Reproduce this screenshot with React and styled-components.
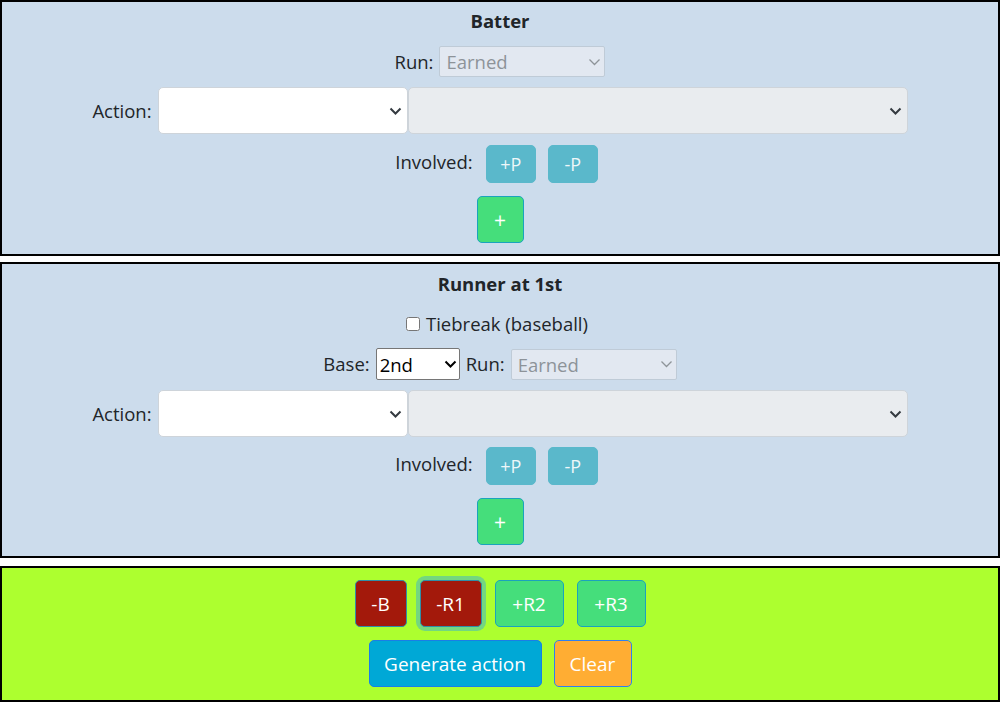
import React from 'react';
import styled, { createGlobalStyle, css } from 'styled-components';

const Global = createGlobalStyle`
  body {
    margin: 0;
    font-family: "Open Sans", "Noto Sans", sans-serif;
    font-size: 18.5px;
    color: #212529;
    background: #fff;
  }
`;

const Panel = styled.section`
  border: 2px solid #000;
  background: ${p => p.$bg};
  display: flex;
  flex-direction: column;
  align-items: center;
  padding: ${p => p.$pad};
  margin-bottom: ${p => p.$mb || 0}px;
`;

const Title = styled.h3`
  margin: 0;
  font-size: 18.5px;
  font-weight: 700;
  line-height: 30px;
`;

const Row = styled.div`
  display: flex;
  align-items: center;
  justify-content: center;
  gap: ${p => p.$gap ?? 6}px;
  margin-top: ${p => p.$mt || 0}px;
  padding-right: ${p => p.$pr || 0}px;
  height: ${p => p.$h}px;
`;

const Label = styled.label`
  line-height: 30px;
  white-space: nowrap;
`;

const SelectWrap = styled.div`
  position: relative;
  width: ${p => p.$w}px;
  height: ${p => p.$h}px;
`;

const Select = styled.select`
  appearance: none;
  box-sizing: border-box;
  width: 100%;
  height: 100%;
  margin: 0;
  font: inherit;
  opacity: 1;
  padding: 0 24px 0 6px;
  ${p => p.$kind === 'form' && css`
    background: ${p.disabled ? '#e9ecef' : '#fff'};
    border: 1px solid #ced4da;
    border-radius: 5px;
  `}
  ${p => p.$kind === 'dim' && css`
    background: #e2e8f1;
    border: 1px solid #bfcbd7;
    border-radius: 2px;
    color: #8d9399;
  `}
  ${p => p.$kind === 'native' && css`
    background: #fff;
    border: 1px solid #767676;
    border-radius: 2px;
    color: #000;
    padding-left: 3px;
  `}
  &:disabled {
    opacity: 1;
  }
`;

const Chevron = styled.svg`
  position: absolute;
  top: 50%;
  right: ${p => p.$r}px;
  transform: translateY(-50%);
  pointer-events: none;
`;

function Dropdown({ w, h, kind, disabled, value, chevron = '#343a40', r = 6 }) {
  return (
    <SelectWrap $w={w} $h={h}>
      <Select $kind={kind} disabled={disabled} defaultValue={value}>
        <option value={value || ''}>{value || ''}</option>
      </Select>
      <Chevron $r={r} width="13" height="8" viewBox="0 0 13 8">
        <path d="M1.5 1.5l5 5 5-5" fill="none" stroke={chevron} strokeWidth={kind === 'dim' ? 1.3 : 2} />
      </Chevron>
    </SelectWrap>
  );
}

const Btn = styled.button`
  box-sizing: border-box;
  font: inherit;
  font-size: 19px;
  color: #fff;
  width: ${p => p.$w}px;
  height: ${p => p.$h || 47}px;
  padding: 0;
  border-radius: 5px;
  cursor: pointer;
  ${p => p.$tone === 'info' && css`
    background: #5ab8cb;
    border: 1px solid #5ab8cb;
    color: #eef7f9;
    font-size: 18px;
  `}
  ${p => p.$tone === 'add' && css`
    background: #45de7b;
    border: 1px solid #1ba3bd;
    font-size: 21px;
  `}
  ${p => p.$tone === 'red' && css`
    background: #a3190b;
    border: 1px solid #2f8fa8;
  `}
  ${p => p.$tone === 'green' && css`
    background: #45de7b;
    border: 1px solid #1ba3bd;
  `}
  ${p => p.$tone === 'blue' && css`
    background: #00a8d6;
    border: 1px solid #1a7ee6;
  `}
  ${p => p.$tone === 'orange' && css`
    background: #ffad33;
    border: 1px solid #2f7ff0;
  `}
  ${p => p.$focus && css`
    box-shadow: 0 0 0 4px #74d780;
  `}
`;

const Check = styled.input`
  width: 14px;
  height: 14px;
  margin: 0 6px 0 0;
`;

function ActionRow({ mt }) {
  return (
    <Row $mt={mt} $h={47} $gap={0}>
      <Label style={{ marginRight: 6 }}>Action:</Label>
      <Dropdown w={250} h={47} kind="form" />
      <Dropdown w={500} h={47} kind="form" disabled />
    </Row>
  );
}

function InvolvedRow({ mt }) {
  return (
    <Row $mt={mt} $h={38} $gap={12} $pr={7}>
      <Label style={{ marginRight: 1, alignSelf: 'flex-start', lineHeight: '34px' }}>Involved:</Label>
      <Btn $tone="info" $w={50} $h={38}>+P</Btn>
      <Btn $tone="info" $w={50} $h={38}>-P</Btn>
    </Row>
  );
}

export default function App() {
  return (
    <>
      <Global />
      <Panel $bg="#ccdcec" $pad="4px 0 11px" $mb={6}>
        <Title>Batter</Title>
        <Row $mt={10} $h={31}>
          <Label>Run:</Label>
          <Dropdown w={166} h={31} kind="dim" value="Earned" chevron="#8e9499" r={4} />
        </Row>
        <ActionRow mt={10} />
        <InvolvedRow mt={11} />
        <Row $mt={13} $h={47}>
          <Btn $tone="add" $w={47}>+</Btn>
        </Row>
      </Panel>

      <Panel $bg="#ccdcec" $pad="5px 0 11px" $mb={8}>
        <Title>Runner at 1st</Title>
        <Row $mt={10} $h={30} $gap={0} $pr={6}>
          <Check type="checkbox" />
          <Label>Tiebreak (baseball)</Label>
        </Row>
        <Row $mt={9} $h={32}>
          <Label>Base:</Label>
          <Dropdown w={84} h={32} kind="native" value="2nd" chevron="#000" r={3} />
          <Label>Run:</Label>
          <Dropdown w={166} h={31} kind="dim" value="Earned" chevron="#8e9499" r={4} />
        </Row>
        <ActionRow mt={10} />
        <InvolvedRow mt={10} />
        <Row $mt={13} $h={47}>
          <Btn $tone="add" $w={47}>+</Btn>
        </Row>
      </Panel>

      <Panel $bg="#adff2f" $pad="12px 0 13px">
        <Row $h={47} $gap={13}>
          <Btn $tone="red" $w={52}>-B</Btn>
          <Btn $tone="red" $w={62} $focus>-R1</Btn>
          <Btn $tone="green" $w={69}>+R2</Btn>
          <Btn $tone="green" $w={69}>+R3</Btn>
        </Row>
        <Row $mt={13} $h={47} $gap={12}>
          <Btn $tone="blue" $w={173}>Generate action</Btn>
          <Btn $tone="orange" $w={78}>Clear</Btn>
        </Row>
      </Panel>
    </>
  );
}
